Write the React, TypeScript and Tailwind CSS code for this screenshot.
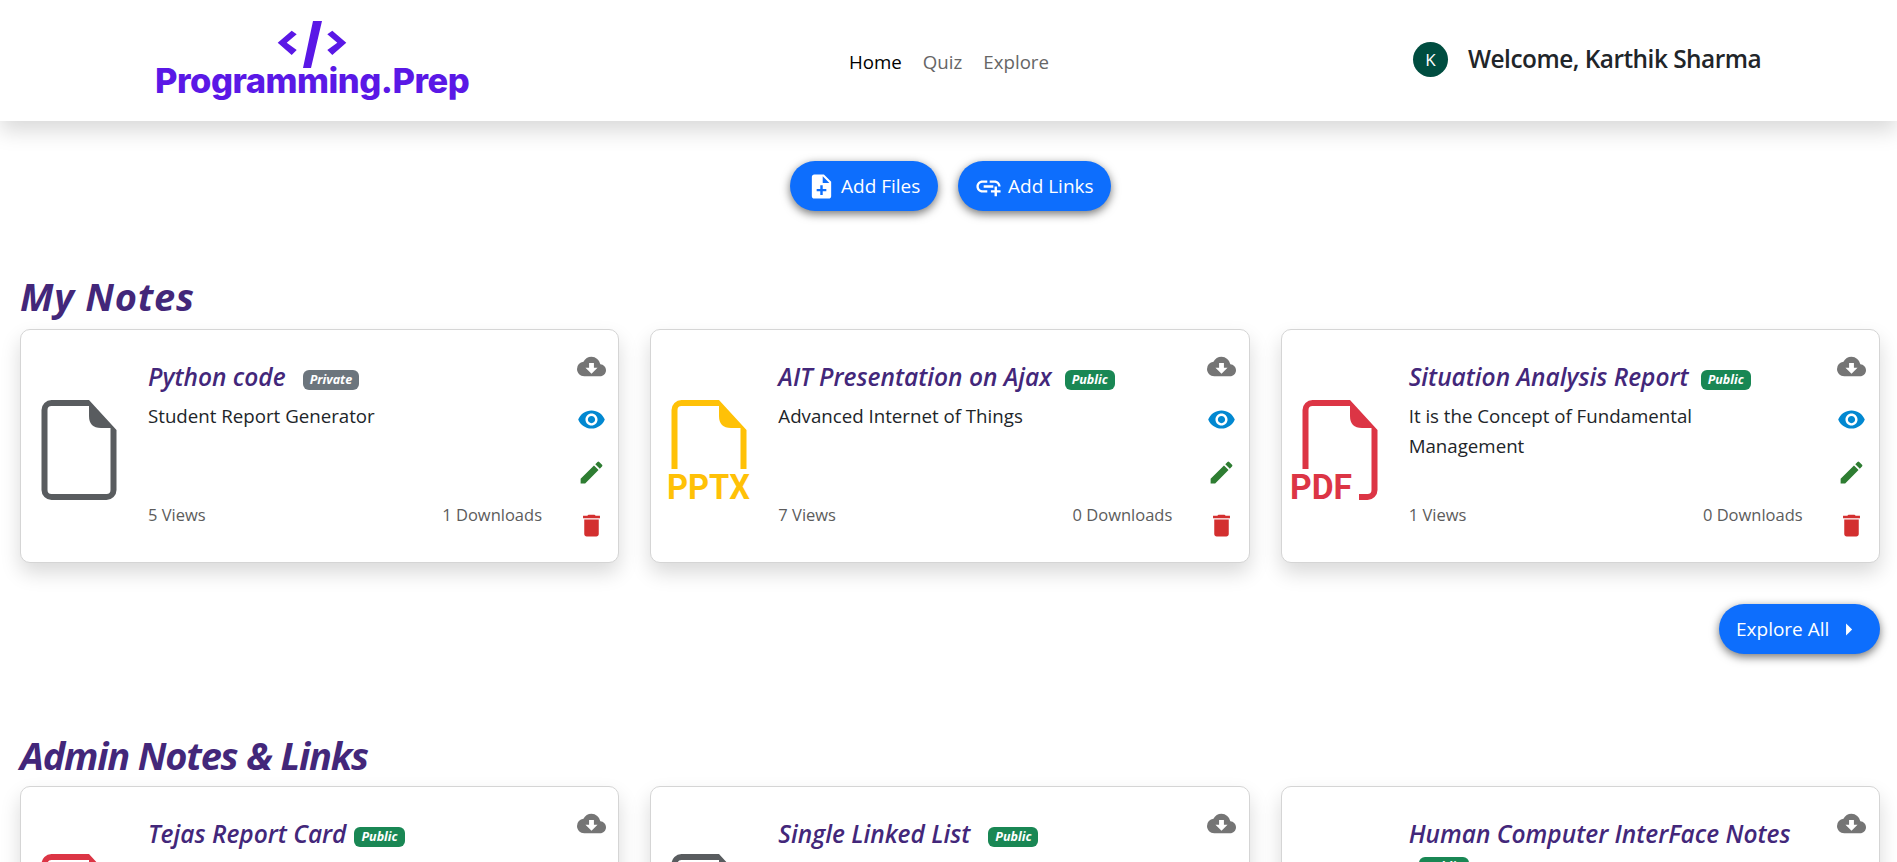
import { MdAddLink, MdArrowRight, MdCloudDownload, MdDelete, MdEdit, MdNoteAdd, MdVisibility } from 'react-icons/md';

type Note = {
  title: string;
  description: string;
  kind: 'file' | 'pptx' | 'pdf';
  badge: 'Public' | 'Private';
  badgeGap: string;
  iconPad: string;
  views?: number;
  downloads?: number;
};

const myNotes: Note[] = [
  { title: 'Python code', description: 'Student Report Generator', kind: 'file', badge: 'Private', badgeGap: 'ml-[17px]', iconPad: 'pt-[8px]', views: 5, downloads: 1 },
  { title: 'AIT Presentation on Ajax', description: 'Advanced Internet of Things', kind: 'pptx', badge: 'Public', badgeGap: 'ml-[13px]', iconPad: 'pt-[8px]', views: 7, downloads: 0 },
  { title: 'Situation Analysis Report', description: 'It is the Concept of Fundamental Management', kind: 'pdf', badge: 'Public', badgeGap: 'ml-[12px]', iconPad: 'pt-[8px]', views: 1, downloads: 0 },
];

const adminNotes: Note[] = [
  { title: 'Tejas Report Card', description: '', kind: 'pdf', badge: 'Public', badgeGap: 'ml-[8px]', iconPad: 'pt-[2px]' },
  { title: 'Single Linked List', description: '', kind: 'file', badge: 'Public', badgeGap: 'ml-[18px]', iconPad: 'pt-[2px]' },
  { title: 'Human Computer InterFace Notes', description: '', kind: 'pdf', badge: 'Public', badgeGap: 'ml-[10px]', iconPad: 'pt-[40px]' },
];

function FileIcon({ kind }: { kind: Note['kind'] }) {
  if (kind === 'pptx') {
    return (
      <svg viewBox="0 0 100 100" className="h-[100px] w-[100px] text-[#ffc107]" fill="currentColor">
        <path d="M12.5 69V10a10 10 0 0 1 10-10H60L87.5 30V69H81.5V28H72Q60 28 60 16V6H22.5a4 4 0 0 0-4 4V69Z" />
        <text x="8" y="99" fontSize="35" fontWeight="700" textLength="83" lengthAdjust="spacingAndGlyphs" fontFamily="Roboto, sans-serif">PPTX</text>
      </svg>
    );
  }
  if (kind === 'pdf') {
    return (
      <svg viewBox="0 0 100 100" className="h-[100px] w-[100px] text-[#dc3545]" fill="currentColor">
        <path d="M12.5 69V10a10 10 0 0 1 10-10H60L87.5 30V90a10 10 0 0 1-10 10H69V94H77.5a4 4 0 0 0 4-4V28H72Q60 28 60 16V6H22.5a4 4 0 0 0-4 4V69Z" />
        <text x="0" y="99" fontSize="35" fontWeight="700" textLength="62" lengthAdjust="spacingAndGlyphs" fontFamily="Roboto, sans-serif">PDF</text>
      </svg>
    );
  }
  return (
    <svg viewBox="0 0 100 100" className="h-[100px] w-[100px] text-[#595c5f]" fill="currentColor">
      <path
        fillRule="evenodd"
        d="M22.5 0H60L87.5 30V90a10 10 0 0 1-10 10H22.5a10 10 0 0 1-10-10V10a10 10 0 0 1 10-10ZM22.5 6a4 4 0 0 0-4 4V90a4 4 0 0 0 4 4H77.5a4 4 0 0 0 4-4V28H72Q60 28 60 16V6Z"
      />
    </svg>
  );
}

function NoteCard({ note }: { note: Note }) {
  return (
    <div className="flex h-[234px] rounded-[10px] border border-[#d5d5d5] bg-white shadow-[0_10px_20px_rgba(0,0,0,0.15)]">
      <div className={`flex w-[127px] shrink-0 items-center pl-[8px] ${note.iconPad}`}>
        <FileIcon kind={note.kind} />
      </div>
      <div className="flex w-[394px] shrink-0 flex-col pt-[32px]">
        <h5 className="text-[24.5px] leading-[30px] font-semibold text-[#43277a] italic">
          {note.title}
          <span className={`${note.badgeGap} inline-block translate-y-[1px] rounded-[6px] px-[7px] align-middle text-[12.5px] leading-[20px] font-bold text-white ${note.badge === 'Public' ? 'bg-[#198754]' : 'bg-[#6c757d]'}`}>
            {note.badge}
          </span>
        </h5>
        <p className="mt-[9px] text-[18.7px] leading-[30px] text-[#212529]">{note.description}</p>
        {note.views !== undefined && (
          <div className="mt-auto mb-[35px] flex justify-between text-[16.5px] leading-[24px] text-[#5c5c5c]">
            <span>{note.views} Views</span>
            <span>{note.downloads} Downloads</span>
          </div>
        )}
      </div>
      <div className="flex flex-1 flex-col items-center gap-[24px] pl-[22px] pt-[22px]">
        <MdCloudDownload className="h-[29px] w-[29px] text-[#757575]" />
        <MdVisibility className="h-[29px] w-[29px] text-[#0288d1]" />
        <MdEdit className="h-[29px] w-[29px] text-[#2e7d32]" />
        <MdDelete className="h-[29px] w-[29px] text-[#d32f2f]" />
      </div>
    </div>
  );
}

function PillButton({ children, className }: { children: React.ReactNode; className: string }) {
  return (
    <button className={`flex h-[50px] items-center rounded-full bg-[#0d6efd] text-[19px] text-white shadow-[0_3px_10px_rgba(0,0,0,0.55)] ${className}`}>
      {children}
    </button>
  );
}

export default function App() {
  return (
    <div className="h-[862px] overflow-hidden bg-white font-['Open_Sans',sans-serif]">
      <header className="relative z-10 grid h-[121px] grid-cols-[849px_564px_1fr] bg-white shadow-[0_10px_20px_rgba(0,0,0,0.15)]">
        <div className="flex flex-col items-start pl-[155px] pt-[20px]">
          <svg viewBox="0 0 70 48" className="ml-[122px] h-[48px] w-[70px] text-[#5a18e6]" fill="currentColor">
            <path d="M.7 22.7 14.7 10.7 19.7 14.3 9.7 22.7 19.7 30 14.7 35ZM69.3 22.7 55.3 10.7 50.3 14.3 60.3 22.7 50.3 30 55.3 35ZM36 1H45L34 48H26Z" />
          </svg>
          <span className="mt-[-7px] font-['Inter',sans-serif] text-[34.5px] leading-[40px] font-extrabold tracking-[-0.5px] whitespace-nowrap text-[#5a18e6]">
            Programming.Prep
          </span>
        </div>
        <nav className="flex items-center gap-[21px] pt-[3px] text-[18.7px] text-[#666666]">
          <a className="text-black">Home</a>
          <a>Quiz</a>
          <a>Explore</a>
        </nav>
        <div className="flex items-center gap-[20px] pb-[2px]">
          <div className="flex h-[35px] w-[35px] items-center justify-center rounded-full bg-[#004d40] text-[17px] text-white">K</div>
          <span className="text-[24.4px] font-semibold tracking-[-0.5px] text-[#212529]">Welcome, Karthik Sharma</span>
        </div>
      </header>

      <main className="pl-[20px] pr-[17px] pt-[40px]">
        <div className="flex justify-center gap-[20px] pl-[1px]">
          <PillButton className="w-[148px] gap-[5px] pl-[17px]">
            <MdNoteAdd className="h-[29px] w-[29px]" />
            Add Files
          </PillButton>
          <PillButton className="w-[153px] gap-[5px] pl-[16px]">
            <MdAddLink className="h-[29px] w-[29px]" />
            Add Links
          </PillButton>
        </div>

        <h2 className="mt-[61px] text-[38px] leading-[48px] font-bold tracking-[0.75px] text-[#43277a] italic">My Notes</h2>
        <section className="mt-[9px] grid grid-cols-3 gap-[31px]">
          {myNotes.map((note) => (
            <NoteCard key={note.title} note={note} />
          ))}
        </section>

        <div className="mt-[41px] flex justify-end">
          <PillButton className="w-[161px] pl-[17px]">
            Explore All
            <MdArrowRight className="ml-[5px] h-[29px] w-[29px]" />
          </PillButton>
        </div>

        <h2 className="mt-[77px] text-[38px] leading-[48px] font-bold tracking-[-1.2px] text-[#43277a] italic">Admin Notes &amp; Links</h2>
        <section className="mt-[7px] grid grid-cols-3 gap-[31px]">
          {adminNotes.map((note) => (
            <NoteCard key={note.title} note={note} />
          ))}
        </section>
      </main>
    </div>
  );
}
